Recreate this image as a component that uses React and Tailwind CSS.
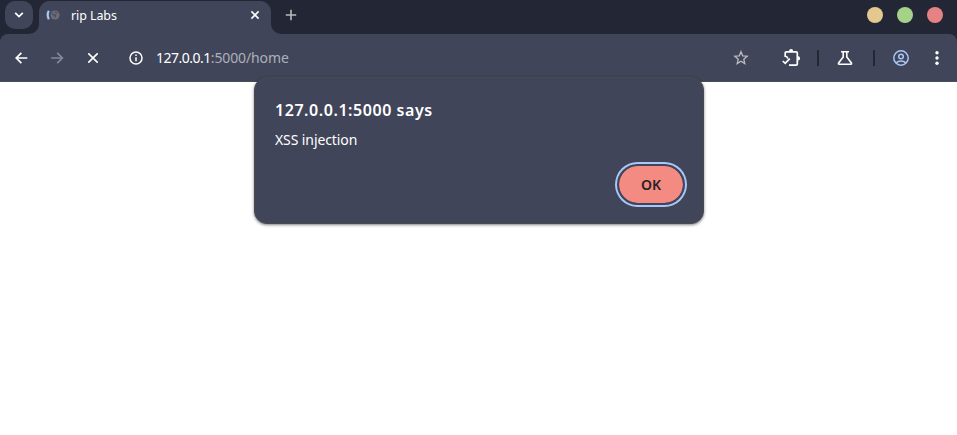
import React from "react";

function TabStrip() {
  return (
    <header className="flex h-[34px] items-start bg-[#232634]">
      <button className="ml-[5px] mt-px flex h-7 w-7 items-center justify-center rounded-[10px] bg-[#414559]">
        <svg width="12" height="12" viewBox="0 0 12 12" fill="none" stroke="#fff" strokeWidth="1.8">
          <path d="M2.2 3.9 6 7.6l3.8-3.7" />
        </svg>
      </button>
      <svg className="ml-[-4px] mt-6 shrink-0" width="10" height="10" viewBox="0 0 10 10" fill="#414559">
        <path d="M10 0v10H0A10 10 0 0 0 10 0Z" />
      </svg>
      <div className="mt-px flex h-[33px] w-[232px] items-start rounded-t-[11px] bg-[#414559]">
        <svg className="ml-1.5 mt-1.5" width="17" height="17" viewBox="0 0 17 17" fill="none">
          <path d="M3.8 3.8Q1.6 7.8 3.8 12.4" stroke="#a8c7fa" strokeWidth="2.2" />
          <circle cx="10" cy="8" r="4.6" fill="#6b6e77" />
          <path d="m6.8 6.2 1.6 1.6 2.2.2-.6 2.4M9.8 5l2.6 1" stroke="#464a5a" strokeWidth="1.2" />
        </svg>
        <span className="ml-[9px] mt-1.5 text-[12.5px] leading-[17px] tracking-[-0.1px] text-white">rip Labs</span>
        <svg className="ml-auto mr-[11px] mt-[9px]" width="10" height="10" viewBox="0 0 10 10" stroke="#fff" strokeWidth="1.6">
          <path d="m1.4 1.4 7.2 7.2M8.6 1.4 1.4 8.6" />
        </svg>
      </div>
      <svg className="mt-6 shrink-0" width="10" height="10" viewBox="0 0 10 10" fill="#414559">
        <path d="M0 0v10h10A10 10 0 0 1 0 0Z" />
      </svg>
      <svg className="ml-1 mt-[9px]" width="12" height="12" viewBox="0 0 12 12" stroke="#b9babe" strokeWidth="1.6">
        <path d="M6 .8v10.4M.8 6h10.4" />
      </svg>
      <div className="ml-auto mr-3.5 mt-[7px] flex gap-3.5">
        <span className="size-4 rounded-full bg-[#e5c890]" />
        <span className="size-4 rounded-full bg-[#a6d189]" />
        <span className="size-4 rounded-full bg-[#e78284]" />
      </div>
    </header>
  );
}

function Toolbar() {
  return (
    <div className="bg-[#232634]">
      <nav className="flex h-12 items-center rounded-t-lg border-b border-[#484b59] bg-[#414559] text-white">
        <svg className="ml-[15px]" width="13" height="12" viewBox="0 0 13 12" fill="none" stroke="currentColor" strokeWidth="1.7">
          <path d="M12.3 6H1.3M6.4.8 1.2 6l5.2 5.2" />
        </svg>
        <svg className="ml-[23px] text-[#868894]" width="13" height="12" viewBox="0 0 13 12" fill="none" stroke="currentColor" strokeWidth="1.7">
          <path d="M.2 6h11.2M6.2.8 11.4 6l-5.2 5.2" />
        </svg>
        <svg className="ml-6" width="10" height="10" viewBox="0 0 10 10" stroke="currentColor" strokeWidth="1.6">
          <path d="m.3.3 9.4 9.4M9.7.3.3 9.7" />
        </svg>
        <svg className="ml-[31px]" width="14" height="14" viewBox="0 0 14 14" fill="none" stroke="currentColor" strokeWidth="1.5">
          <circle cx="7" cy="7" r="6" />
          <path d="M7 6.2v4M7 3.6v1.5" />
        </svg>
        <span className="ml-[13px] text-[14px] leading-5 tracking-[-0.12px] text-[#adb0ba]">
          <span className="tracking-[-0.5px] text-white">127.0.0.1</span>:5000/home
        </span>
        <svg className="ml-auto" width="16" height="16" viewBox="0 0 16 16" fill="none" stroke="#babbc0" strokeWidth="1.3">
          <path d="m8 1.7 1.7 4.1 4.5.4-3.4 3 1 4.4L8 11.3l-3.8 2.3 1-4.4-3.4-3 4.5-.4Z" />
        </svg>
        <svg className="ml-[33px]" width="20" height="18" viewBox="0 0 20 18" fill="none" stroke="currentColor" strokeWidth="1.7">
          <path d="M3.2 8V4q0-1.2 1.2-1.2h9.7q1.2 0 1.2 1.2v11q0 1.2-1.2 1.2H7" />
          <path d="M3.2 7.3q2.5.4 2.5 2.5" strokeWidth="1.5" />
          <path d="m.8 12 2.4 2.4 4.6-4.8" />
          <path d="M7 2.2a2.1 2.1 0 0 1 4.2 0ZM16 7.3a2.1 2.1 0 0 1 0 4.2Z" fill="currentColor" stroke="none" />
        </svg>
        <span className="ml-[15px] h-4 w-0.5 bg-[#232634]" />
        <svg className="ml-[18px]" width="16" height="16" viewBox="0 0 16 16" fill="none" stroke="currentColor" strokeWidth="1.6">
          <path d="M4 1.8h8M6.2 1.8v5.1l-4.6 6.1q-.6 1.2.6 1.2h11.6q1.2 0 .6-1.2L9.8 6.9V1.8" />
        </svg>
        <span className="ml-5 h-4 w-0.5 bg-[#232634]" />
        <svg className="ml-[18px]" width="16" height="16" viewBox="0 0 16 16" fill="none" stroke="#a8c7fa" strokeWidth="1.5">
          <circle cx="8" cy="8" r="7.2" />
          <circle cx="8" cy="6.5" r="2.3" />
          <path d="M3 13q2-2.1 5-2.1t5 2.1" />
        </svg>
        <svg className="ml-6 mr-4" width="8" height="16" viewBox="0 0 8 16" fill="currentColor">
          <circle cx="4" cy="2.7" r="1.7" />
          <circle cx="4" cy="8" r="1.7" />
          <circle cx="4" cy="13.3" r="1.7" />
        </svg>
      </nav>
    </div>
  );
}

function AlertDialog() {
  return (
    <section
      role="alertdialog"
      className="absolute left-[254px] top-[77px] flex h-[147px] w-[450px] flex-col rounded-[13px] border border-[#484a50] bg-[#414559] pl-5 pr-[18px] text-white shadow-[0_1px_3px_rgba(0,0,0,0.5)]"
    >
      <h1 className="mt-5 text-[16px] font-semibold leading-6 tracking-[0.55px]">127.0.0.1:5000 says</h1>
      <p className="mt-2 text-[14px] leading-5 tracking-[-0.1px]">XSS injection</p>
      <button className="mt-3.5 flex h-[41px] w-[68px] items-center justify-center self-end rounded-full border-2 border-[#414559] bg-[#f38b82] bg-clip-padding pb-px text-[14px] font-semibold text-[#2a2025] ring-2 ring-[#a8c7fa]">
        OK
      </button>
    </section>
  );
}

export default function App() {
  return (
    <main className="relative h-[435px] w-full overflow-hidden bg-white font-['Noto_Sans',sans-serif]">
      <TabStrip />
      <Toolbar />
      <AlertDialog />
    </main>
  );
}
